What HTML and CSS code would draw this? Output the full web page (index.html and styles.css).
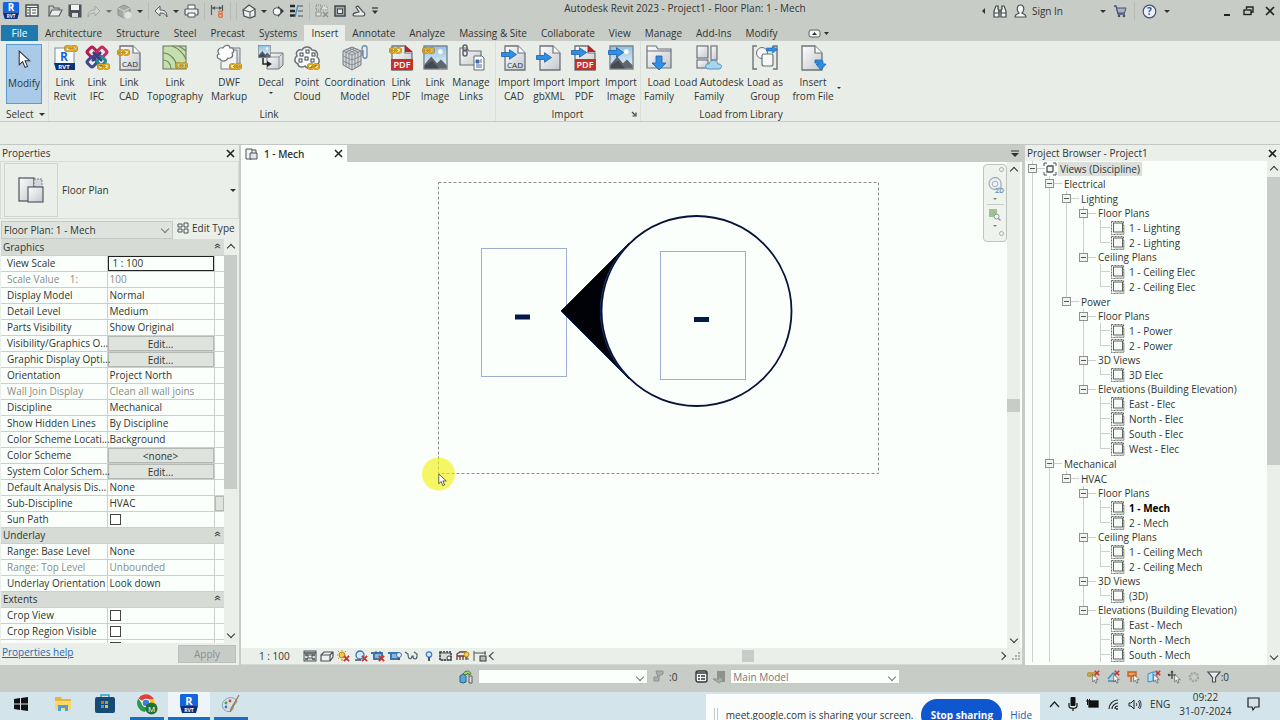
FILE: index.html
```html
<!DOCTYPE html>
<html lang="en">
<head>
    <meta charset="UTF-8">
    <meta name="viewport" content="width=device-width, initial-scale=1.0">
    <title>Autodesk Revit 2023 - Project1 - Floor Plan: 1 - Mech</title>
    <link rel="stylesheet" href="styles.css">
</head>
<body>
    <!-- shared icon shapes -->
    <svg class="defs" width="0" height="0" aria-hidden="true">
        <defs>
            <linearGradient id="metal" x1="0" y1="0" x2="1" y2="1">
                <stop offset="0" stop-color="#fdfdfd"/><stop offset="1" stop-color="#c3c7cc"/>
            </linearGradient>
            <linearGradient id="sky" x1="0" y1="0" x2="0" y2="1">
                <stop offset="0" stop-color="#8fc0e4"/><stop offset="1" stop-color="#eef6fa"/>
            </linearGradient>
        </defs>
        <symbol id="chain" viewBox="0 0 14 7">
            <rect x="1" y="1" width="6" height="5" rx="2.5" fill="none" stroke="#8c6a10" stroke-width="2"/>
            <rect x="7" y="1" width="6" height="5" rx="2.5" fill="none" stroke="#8c6a10" stroke-width="2"/>
            <rect x="1" y="1" width="6" height="5" rx="2.5" fill="none" stroke="#e6b42c" stroke-width="1.3"/>
            <rect x="7" y="1" width="6" height="5" rx="2.5" fill="none" stroke="#e6b42c" stroke-width="1.3"/>
            <path d="M4 3.5h6" stroke="#c89420" stroke-width="1.4"/>
        </symbol>
        <symbol id="arrow" viewBox="0 0 16 11">
            <path d="M.5 3.5h8V.7l7 4.8-7 4.8V7.5h-8z" fill="#2f8fe6" stroke="#1c5fa8" stroke-width=".8"/>
        </symbol>
        <symbol id="page" viewBox="0 0 22 26">
            <path d="M1 1h13l7 7v17H1z" fill="url(#metal)" stroke="#6d7378" stroke-width="1.3"/>
            <path d="M14 1v7h7" fill="#fff" stroke="#6d7378" stroke-width="1.2"/>
        </symbol>
        <symbol id="photo" viewBox="0 0 26 26">
            <rect x="1" y="1" width="24" height="24" fill="url(#sky)" stroke="#6d7378" stroke-width="1.2"/>
            <circle cx="18" cy="7" r="2.5" fill="#fffbe0"/>
            <path d="M1.600 20l7-8 6 7 4-4 6 6v3.400h-23z" fill="#5f666d"/>
            <path d="M1.600 24.400v-3l8-5 7 8z" fill="#434a52"/>
        </symbol>
        <symbol id="revit" viewBox="0 0 20 20" overflow="visible">
            <path d="M2 0h16l1 1v11H1V1z" fill="#1464e0"/><path d="M1 12h18l-2 7H3z" fill="#0b2f7c"/>
            <text x="10" y="10.500" text-anchor="middle" font-size="11" font-weight="700" fill="#fff">R</text>
            <text x="10" y="17.500" text-anchor="middle" font-size="5" font-weight="700" fill="#fff">RVT</text>
        </symbol>
        <symbol id="pointer" viewBox="0 0 12 18">
            <path d="M1 1v13l3.200-3 2.300 5.500 2.300-1-2.300-5.300H11z" fill="#fff" stroke="#333" stroke-width="1"/>
        </symbol>
        <symbol id="redx" viewBox="0 0 6 6"><path d="M.8.8l4.400 4.400M5.200.8L.8 5.200" stroke="#c9342c" stroke-width="1.600"/></symbol>
        <symbol id="sheet" viewBox="0 0 14 14">
            <rect x=".5" y=".5" width="12" height="13" fill="none" stroke="#666b68" stroke-dasharray="2 1"/>
            <rect x="2.500" y="2" width="9" height="9" fill="#f6f9f6" stroke="#5c625f"/>
            <path d="M4 13h9V4" fill="none" stroke="#a7ada9"/>
        </symbol>
    </svg>

    <div class="app">
        <header class="titlebar">
            <div class="qat">
                <button class="app-logo" title="Revit"><svg width="18" height="20"><use href="#revit"/></svg></button>
                <button title="Home"><svg width="14" height="14"><rect x="1" y="1" width="12" height="11" fill="#f5f7f5" stroke="#4a5055" stroke-width="1.500"/><path d="M1 3.500h12M5 4v8M7 6h4M7 9h4M2 6h2M2 9h2" stroke="#4a5055" stroke-width="1.200"/></svg></button>
                <button class="spaced" title="Open"><svg width="15" height="14"><path d="M1 12V2h4l1 2h5v2" fill="none" stroke="#5b6166" stroke-width="1.200"/><path d="M1 12l3-6h10l-3 6z" fill="#eceeec" stroke="#5b6166" stroke-width="1.200"/></svg></button>
                <button title="Save"><svg width="14" height="14"><path d="M.5.5h13v13h-11l-2-2z" fill="#4c5257"/><rect x="3" y="1" width="8" height="5" fill="#f3f5f3"/><rect x="4" y="9" width="6" height="4" fill="#d8dcd8"/></svg></button>
                <button class="dim" title="Redo"><svg width="14" height="13"><path d="M1 12c0-6 3-7 7-7V1l5 5-5 5V8C5 8 3 8 1 12z" fill="#d4d7d4" stroke="#8d928e"/></svg></button>
                <i class="caret dim"></i>
                <button title="Synchronize"><svg width="15" height="15"><path d="M7 1l6 3v7l-6 3-6-3V4z" fill="#a5aaa6" stroke="#8b908c"/><path d="M1 4l6 3 6-3M7 7v7" stroke="#d5d9d5" fill="none"/><circle cx="11" cy="11" r="3.500" fill="#dfe2df"/></svg></button>
                <i class="caret"></i>
                <b class="sep"></b>
                <button title="Undo"><svg width="14" height="13"><path d="M13 12c0-6-3-7-7-7V1L1 6l5 5V8c3 0 5 0 7 4z" fill="#e8ebe8" stroke="#555b60"/></svg></button>
                <i class="caret"></i>
                <button title="Print"><svg width="15" height="14"><path d="M4 5V1h7v4" fill="#fff" stroke="#4f555a"/><rect x="1" y="5" width="13" height="6" rx="1" fill="#eceeec" stroke="#4f555a" stroke-width="1.200"/><path d="M4 9h7v4H4z" fill="#fff" stroke="#4f555a"/></svg></button>
                <b class="sep"></b>
                <button title="Aligned dimension"><svg width="15" height="14"><path d="M1.500 1v10M12.500 1v6M2 4h10" stroke="#555b60" stroke-width="1.200"/><path d="M2 4l3-2v4zM12 4L9 2v4z" fill="#555b60"/><circle cx="10.500" cy="8.500" r="1.700" fill="none" stroke="#e2703a" stroke-width="1.300"/><circle cx="10.500" cy="11.500" r="1.900" fill="none" stroke="#e2703a" stroke-width="1.300"/></svg></button>
                <b class="sep"></b>
                <b class="sep"></b>
                <button title="Default 3D view"><svg width="14" height="14"><path d="M1 6l6-5 6 4v7l-5 2-6-2z" fill="#eceeec" stroke="#4b5156" stroke-width="1.300"/><path d="M1 6l7 2 5-3M8 8v5" stroke="#4b5156" fill="none"/></svg></button>
                <i class="caret"></i>
                <button title="Section"><svg width="12" height="13"><path d="M6 1l6 5-6 6z" fill="#33383c"/><circle cx="5" cy="6.500" r="3.800" fill="#f7f9f7" stroke="#4b5156"/></svg></button>
                <button title="Thin lines"><svg width="15" height="14"><path d="M1 2h5M1 7h5M1 11.500h5" stroke="#24292d" stroke-width="2.500"/><path d="M9 2h5M9 7h5M9 12h5" stroke="#4b5156"/><path d="M9 1L6 13" stroke="#3d8fd6" stroke-width="1.300"/></svg></button>
                <b class="sep"></b>
                <button title="Close inactive views"><svg width="14" height="14"><rect x="1" y="1" width="5" height="5" fill="#c3c7c3" stroke="#7c817e" stroke-dasharray="1 1"/><rect x="7" y="2" width="5" height="4" fill="#dde0dd" stroke="#8c918e" stroke-dasharray="1 1"/><rect x="1" y="8" width="5" height="4" fill="#dde0dd" stroke="#8c918e"/><path d="M8 8l5 5m0-5l-5 5" stroke="#8c918e" stroke-width="1.500"/></svg></button>
                <button title="Switch windows"><svg width="12" height="12"><rect x="1" y="1" width="10" height="10" fill="#a3a8ab" stroke="#42484d" stroke-width="1.500"/><rect x="3.500" y="4" width="5" height="4.500" fill="#e4e7e4" stroke="#42484d"/></svg></button>
                <button title="User interface"><svg width="15" height="13"><path d="M2 10c0-3 3-2 6-3L5 2l2-1 5 6c3 1 2 4 0 4H3z" fill="#eceeec" stroke="#4b5156" stroke-width="1.200"/></svg></button>
                <button title="Customize"><svg width="8" height="8"><path d="M1 1h6" stroke="#333" stroke-width="1.200"/><path d="M1 3.500h6L4 7z" fill="#333"/></svg></button>
            </div>
            <h1 class="title">Autodesk Revit 2023 - Project1 - Floor Plan: 1 - Mech</h1>
            <div class="account">
                <button title="Collapse"><svg width="5" height="8"><path d="M4 1v6L1 4z" fill="#333"/></svg></button>
                <button title="Search"><svg width="14" height="13"><path d="M3 1h2v3l1 1v7H1V6zM9 1h2l2 5v6H8V5l1-1zM5 6h4M1 8h5M8 8h5" fill="#f3f5f3" stroke="#3f454a" stroke-width="1.200"/></svg></button>
                <button class="signin"><svg width="13" height="14"><path d="M1 13c0-3 3-3 4-4-3-3-2-8 1.500-8S11 6 8 9c1 1 4 1 4 4z" fill="#f3f5f3" stroke="#4b5156" stroke-width="1.200"/></svg>Sign In</button>
                <i class="caret"></i>
                <button title="App store"><svg width="14" height="13"><path d="M1 1h2l2 8h7" fill="none" stroke="#4b5175" stroke-width="1.300"/><path d="M3.500 3h9.500l-1.500 5H5z" fill="#a9b1c6" stroke="#4b5175"/><circle cx="6" cy="11" r="1.300" fill="#4b5175"/><circle cx="11" cy="11" r="1.300" fill="#4b5175"/></svg></button>
                <b class="sep"></b>
                <button title="Help"><svg width="15" height="15"><circle cx="7.500" cy="7.500" r="6.300" fill="#eef2f8" stroke="#41506f" stroke-width="1.200"/><text x="7.500" y="11" text-anchor="middle" font-size="10" font-weight="700" fill="#2d55a5">?</text></svg></button>
                <i class="caret"></i>
            </div>
            <div class="window-buttons">
                <button title="Minimize"><svg width="10" height="10"><path d="M2 9h6" stroke="#222" stroke-width="2"/></svg></button>
                <button title="Restore"><svg width="11" height="10"><path d="M3.500 3V1h6.500v5H8" fill="none" stroke="#222" stroke-width="1.400"/><rect x="1" y="4" width="7" height="4.500" fill="none" stroke="#222" stroke-width="1.400"/></svg></button>
                <button title="Close"><svg width="10" height="10"><path d="M1 1l8 8m0-8L1 9" stroke="#222" stroke-width="1.600"/></svg></button>
            </div>
        </header>

        <nav class="tabs">
            <button class="file">File</button>
            <button>Architecture</button>
            <button>Structure</button>
            <button>Steel</button>
            <button>Precast</button>
            <button>Systems</button>
            <button class="active">Insert</button>
            <button>Annotate</button>
            <button>Analyze</button>
            <button>Massing &amp; Site</button>
            <button>Collaborate</button>
            <button>View</button>
            <button>Manage</button>
            <button>Add-Ins</button>
            <button>Modify</button>
            <button class="ribbon-toggle" title="Minimize ribbon"><svg width="22" height="9"><rect x="1" y="1" width="11" height="7" rx="2" fill="#f3f5f3" stroke="#5b6166"/><path d="M4 6h5L6.500 3zM16 3h5l-2.500 3z" fill="#333"/></svg></button>
        </nav>

        <div class="ribbon">
            <section class="panel select-panel">
                <div class="tools">
                    <button class="tool modify"><svg width="26" height="28"><use href="#pointer" x="7" y="5" width="13" height="19"/></svg>Modify</button>
                </div>
                <h2>Select <i class="caret"></i></h2>
            </section>
            <section class="panel link-panel">
                <div class="tools">
                    <button class="tool slim"><svg width="26" height="28"><rect x="3" y="4" width="19" height="16" fill="#fff" stroke="#7b8cab"/><path d="M2 19h21v7H4z" fill="#0f3476"/><text x="12" y="17" text-anchor="middle" font-size="12" font-weight="700" fill="#1464e0">R</text><text x="12" y="25" text-anchor="middle" font-size="6" font-weight="700" fill="#fff">RVT</text><use href="#chain" x="12" y="1" width="14" height="7"/></svg>Link<br>Revit</button>
                    <button class="tool slim"><svg width="26" height="28"><g fill="none" stroke-width="3"><rect x="4" y="4" width="8" height="8" rx="2" transform="rotate(45 8 8)" stroke="#b2204f"/><rect x="14" y="4" width="8" height="8" rx="2" transform="rotate(45 18 8)" stroke="#c42c60"/><rect x="4" y="14" width="8" height="8" rx="2" transform="rotate(45 8 18)" stroke="#3d4a8e"/><rect x="14" y="14" width="7" height="7" rx="2" transform="rotate(45 18 17)" stroke="#26889a"/></g><path d="M9 8l9 9M8 17l9-9" stroke="#3a3f83" stroke-width="2.500"/><use href="#chain" x="13" y="19" width="13" height="7"/></svg>Link<br>IFC</button>
                    <button class="tool slim"><svg width="26" height="28"><use href="#page" x="3" y="1" width="22" height="26"/><text x="14" y="23" text-anchor="middle" font-size="8" fill="#333">CAD</text><use href="#chain" x="1" y="5" width="13" height="7"/></svg>Link<br>CAD</button>
                    <button class="tool broad"><svg width="26" height="28"><rect x="1" y="2" width="23" height="23" fill="#c5dfae" stroke="#69705f"/><path d="M1 9c8 0 14 8 14 16M1 16c5 0 8 4 8 9M10 2c6 2 12 8 14 13M17 2l7 5" fill="none" stroke="#6b8a5b" stroke-width="1.200"/><use href="#chain" x="13" y="18" width="13" height="7"/></svg>Link<br>Topography</button>
                    <button class="tool wide"><svg width="26" height="28"><path d="M15 4h9v19H9v-5" fill="url(#metal)" stroke="#777c80"/><path d="M12 6h9v19H5v-7" fill="#f3f4f5" stroke="#777c80"/><path d="M4 15c-4-1-3-5-1-5-3-4 1-7 4-6 2-4 7-3 7 0 4-1 5 4 2 5 2 3-1 6-4 5-2 4-7 4-8 1z" fill="#fdfdfd" stroke="#6f7478" stroke-width="1.200"/><use href="#chain" x="13" y="19" width="13" height="7"/></svg>DWF<br>Markup</button>
                    <button class="tool mid"><svg width="26" height="28"><path d="M9 12l4-3h12v12l-4 4H9z" fill="url(#metal)" stroke="#70767b"/><path d="M21 25V13H10m11 0l4-4" fill="none" stroke="#8e9498"/><use href="#photo" x="0" y="1" width="13" height="13"/><path d="M5 14v6h5" fill="none" stroke="#222" stroke-width="1.500"/><path d="M9 17l5 3-5 3z" fill="#222"/></svg>Decal<i class="caret small"></i></button>
                    <button class="tool mid"><svg width="26" height="28"><path d="M4 20c-5-2-3-7-1-8-2-5 2-7 5-6 2-4 8-4 10 0 6 0 6 5 5 7 4 3 2 9-3 8-3 4-7 4-9 1-3 2-7 1-7-2z" fill="#fafbfb" stroke="#6d7378" stroke-width="1.500"/><g fill="#fff" stroke="#3f454a"><rect x="6" y="9" width="3" height="3"/><rect x="12" y="6" width="3" height="3"/><rect x="18" y="9" width="3" height="3"/><rect x="5" y="15" width="3" height="3"/><rect x="11" y="13" width="3" height="3"/><rect x="17" y="15" width="3" height="3"/></g><use href="#chain" x="13" y="19" width="13" height="7"/></svg>Point<br>Cloud</button>
                    <button class="tool broad"><svg width="28" height="28"><path d="M11 3l9 4v14l-9 5-9-5V7z" fill="#d3d6d8" stroke="#74797e"/><path d="M2 7l9 4 9-4M11 11v15M2 12l9 4 9-4M2 17l9 4 9-4M5 5l9 4v15M8 4l9 4v15M17 5L8 9v15M14 4L5 8v15" fill="none" stroke="#858b90"/><path d="M21 12V4c0-3 5-3 5 0v8c0 3-4 3-4 0V6" fill="none" stroke="#6a8ab0" stroke-width="1.300"/></svg>Coordination<br>Model</button>
                    <button class="tool slim"><svg width="26" height="28"><use href="#page" x="3" y="1" width="22" height="26"/><path d="M17 1l8 7h-8z" fill="#b3262b"/><rect x="3" y="15" width="22" height="11" fill="#c6302b"/><text x="14" y="24" text-anchor="middle" font-size="9" font-weight="600" fill="#fff">PDF</text><use href="#chain" x="1" y="3" width="13" height="7"/></svg>Link<br>PDF</button>
                    <button class="tool mid"><svg width="26" height="28"><use href="#photo" x="1" y="1" width="25" height="25"/><use href="#chain" x="0" y="3" width="13" height="7"/></svg>Link<br>Image</button>
                    <button class="tool mid"><svg width="26" height="28"><path d="M2 4h7l2 3h12v14H2z" fill="url(#metal)" stroke="#6d7378" stroke-width="1.200"/><path d="M16 12h8l2 2v12H16z" fill="#fff" stroke="#60676c"/><path d="M18 16h3v3h-3zM22 16h2M22 18h2M18 21h6M18 23h6" fill="#3c6ba8" stroke="#3c6ba8"/><g fill="none" stroke="#5d6368" stroke-width="1.500"><rect x="5" y="1" width="4" height="6" rx="2"/><rect x="5" y="6" width="4" height="6" rx="2"/></g></svg>Manage<br>Links</button>
                </div>
                <h2>Link</h2>
            </section>
            <section class="panel import-panel">
                <div class="tools">
                    <button class="tool mid"><svg width="26" height="28"><use href="#page" x="3" y="1" width="22" height="26"/><text x="14" y="24" text-anchor="middle" font-size="8" fill="#333">CAD</text><use href="#arrow" x="0" y="5" width="16" height="11"/></svg>Import<br>CAD</button>
                    <button class="tool slim"><svg width="26" height="28"><use href="#page" x="3" y="1" width="22" height="26"/><use href="#arrow" x="0" y="8" width="16" height="11"/></svg>Import<br>gbXML</button>
                    <button class="tool mid"><svg width="26" height="28"><use href="#page" x="3" y="1" width="22" height="26"/><path d="M17 1l8 7h-8z" fill="#b3262b"/><rect x="4" y="15" width="21" height="11" fill="#c6302b"/><text x="14" y="24" text-anchor="middle" font-size="9" font-weight="600" fill="#fff">PDF</text><use href="#arrow" x="0" y="3" width="16" height="11"/></svg>Import<br>PDF</button>
                    <button class="tool mid"><svg width="26" height="28"><use href="#photo" x="1" y="1" width="25" height="25"/><use href="#arrow" x="0" y="3" width="16" height="11"/></svg>Import<br>Image</button>
                </div>
                <h2>Import</h2>
                <button class="launcher" title="Import options"><svg width="6" height="6"><path d="M1 1l3 3M5 1.500V5H1.500" fill="none" stroke="#444" stroke-width="1.200"/></svg></button>
            </section>
            <section class="panel library-panel">
                <div class="tools">
                    <button class="tool mid"><svg width="26" height="28"><path d="M1 24V2h9l2 3h13v19z" fill="url(#metal)" stroke="#6d7378" stroke-width="1.200"/><path d="M1 7h24" stroke="#6d7378"/><path d="M10 12h6v7h4l-7 7-7-7h4z" fill="#2f8fe6" stroke="#1c5fa8" stroke-width=".8"/></svg>Load<br>Family</button>
                    <button class="tool huge"><svg width="26" height="28"><g fill="url(#metal)" stroke="#6d7378" stroke-width="1.200"><rect x="1" y="2" width="11" height="12"/><rect x="15" y="2" width="6" height="14"/><rect x="1" y="16" width="11" height="8"/></g><path d="M13 25c-5 0-4-6 0-5 1-5 8-5 9 0 5 0 4 5 1 5z" fill="#a9d4ee" stroke="#5493bd"/></svg>Load Autodesk<br>Family</button>
                    <button class="tool wide"><svg width="26" height="28"><path d="M5 2H1v23h4M21 2h4v23h-4" fill="none" stroke="#6d7378" stroke-width="1.400"/><circle cx="10" cy="9" r="5.500" fill="#f6f7f7" stroke="#6d7378"/><rect x="10" y="10" width="11" height="12" rx="2" fill="#f6f7f7" stroke="#6d7378" stroke-width="1.200"/><use href="#arrow" x="14" y="1" width="12" height="9"/></svg>Load as<br>Group</button>
                    <button class="tool wide"><svg width="28" height="28"><use href="#page" x="2" y="1" width="22" height="26"/><path d="M16 16h5c3 0 3 1 3 4h3l-5 6-5-6h3v-1h-4z" fill="#2f8fe6" stroke="#1c5fa8" stroke-width=".8"/></svg>Insert<br>from File</button>
                    <i class="caret small"></i>
                </div>
                <h2>Load from Library</h2>
            </section>
        </div>
        <div class="options-bar"></div>

        <main class="workspace">
            <aside class="properties">
                <div class="panel-title">Properties <button title="Close"><svg width="9" height="9"><path d="M1 1l7 7m0-7L1 8" stroke="#222" stroke-width="1.600"/></svg></button></div>
                <div class="family">
                    <span class="thumb"><svg width="28" height="28"><rect x="2" y="2" width="15" height="23" fill="url(#metal)" stroke="#4b5156" stroke-width="1.200"/><rect x="17" y="3" width="8" height="8" fill="#d3d7db" stroke="#777c80" stroke-dasharray="2 1"/><rect x="11" y="11" width="15" height="15" fill="url(#metal)" stroke="#555b60" stroke-width="1.200"/></svg></span>
                    <span>Floor Plan</span>
                    <i class="caret"></i>
                </div>
                <div class="type-row">
                    <span class="select"><select aria-label="Type"><option>Floor Plan: 1 - Mech</option></select></span>
                    <button><svg width="12" height="12"><path d="M1 2h4v3H1zM1 7h4v3H1zM7 1h4v4H7zM7 7h4v4H7z" fill="#f3f5f3" stroke="#4b5156"/></svg>Edit Type</button>
                </div>
                <div class="prop-body">
                    <div class="prop-scroll">
                        <table>
                            <colgroup><col class="col-name"><col><col class="col-more"></colgroup>
                            <tr class="group"><th colspan="3"><span>Graphics</span></th></tr>
                            <tr><td><label for="scale">View Scale</label></td><td class="field"><input type="text" id="scale" value="1 : 100"></td><td></td></tr>
                            <tr class="off"><td>Scale Value &nbsp;&nbsp; 1:</td><td>100</td><td></td></tr>
                            <tr><td>Display Model</td><td>Normal</td><td></td></tr>
                            <tr><td>Detail Level</td><td>Medium</td><td></td></tr>
                            <tr><td>Parts Visibility</td><td>Show Original</td><td></td></tr>
                            <tr><td>Visibility/Graphics O...</td><td class="field"><button>Edit...</button></td><td></td></tr>
                            <tr><td>Graphic Display Opti...</td><td class="field"><button>Edit...</button></td><td></td></tr>
                            <tr><td>Orientation</td><td>Project North</td><td></td></tr>
                            <tr class="off"><td>Wall Join Display</td><td>Clean all wall joins</td><td></td></tr>
                            <tr><td>Discipline</td><td>Mechanical</td><td></td></tr>
                            <tr><td>Show Hidden Lines</td><td>By Discipline</td><td></td></tr>
                            <tr><td>Color Scheme Locati...</td><td>Background</td><td></td></tr>
                            <tr><td>Color Scheme</td><td class="field"><button>&lt;none&gt;</button></td><td></td></tr>
                            <tr><td>System Color Schem...</td><td class="field"><button>Edit...</button></td><td></td></tr>
                            <tr><td>Default Analysis Dis...</td><td>None</td><td></td></tr>
                            <tr><td>Sub-Discipline</td><td>HVAC</td><td class="field"><button title="Browse"></button></td></tr>
                            <tr><td><label for="sun">Sun Path</label></td><td><input type="checkbox" id="sun"></td><td></td></tr>
                            <tr class="group"><th colspan="3"><span>Underlay</span></th></tr>
                            <tr><td>Range: Base Level</td><td>None</td><td></td></tr>
                            <tr class="off"><td>Range: Top Level</td><td>Unbounded</td><td></td></tr>
                            <tr><td>Underlay Orientation</td><td>Look down</td><td></td></tr>
                            <tr class="group"><th colspan="3"><span>Extents</span></th></tr>
                            <tr><td><label for="crop">Crop View</label></td><td><input type="checkbox" id="crop"></td><td></td></tr>
                            <tr><td><label for="region">Crop Region Visible</label></td><td><input type="checkbox" id="region"></td><td></td></tr>
                            <tr><td></td><td><input type="checkbox" aria-label="Annotation crop"></td><td></td></tr>
                        </table>
                    </div>
                    <div class="scrollbar"><i class="chev up"></i><b class="knob tall"></b><i class="chev down"></i></div>
                </div>
                <div class="prop-footer"><a href="#">Properties help</a><button disabled>Apply</button></div>
            </aside>

            <section class="view">
                <div class="view-tabs">
                    <div class="view-tab"><svg width="13" height="12"><path d="M1 1h6v10H1z" fill="#f3f5f3" stroke="#4b5156"/><path d="M5 5h7v6H5zM7 2h4v3" fill="#e3e6e9" stroke="#4b5156"/></svg><span>1 - Mech</span><button title="Close view"><svg width="9" height="9"><path d="M1 1l7 7m0-7L1 8" stroke="#222" stroke-width="1.500"/></svg></button></div>
                    <button title="View list"><svg width="8" height="7"><path d="M0 1h8" stroke="#333"/><path d="M0 3h8L4 7z" fill="#333"/></svg></button>
                </div>
                <div class="view-body">
                    <svg class="drawing" role="img" aria-label="Elevation mark">
                        <g transform="translate(-241 -162)">
                            <rect x="438.500" y="182.500" width="440" height="291" fill="none" stroke="#8b908d" stroke-dasharray="3 2"/>
                            <rect x="481.500" y="248.500" width="85" height="128" fill="none" stroke="#9fadd0"/>
                            <rect x="660.500" y="251.500" width="85" height="128" fill="none" stroke="#9fadd0"/>
                            <path d="M561 311L629 243A95 95 0 0 0 629 379Z" fill="#000208" stroke="#0c2459"/>
                            <circle cx="696.500" cy="311" r="95" fill="none" stroke="#07123a" stroke-width="1.800"/>
                            <path d="M515 314.500h15v5h-15zM694 317h15v5h-15z" fill="#04184a"/>
                            <circle cx="438.500" cy="474" r="16.500" fill="#f2f000" fill-opacity=".6"/>
                            <use href="#pointer" x="438" y="473" width="9" height="14"/>
                        </g>
                    </svg>
                    <div class="navbar">
                        <i class="dot"></i>
                        <button title="Steering wheel"><svg width="17" height="18"><path d="M14 13V7a6 6 0 1 0-2 5l3 1" fill="#eef2f4" stroke="#a3b0bd" stroke-width="1.300"/><circle cx="8" cy="8" r="2.800" fill="none" stroke="#a3b0bd"/><text x="8" y="17" font-size="7" font-weight="700" fill="#7d9cc4">2D</text></svg></button>
                        <i class="caret small dim"></i>
                        <hr>
                        <button title="Zoom region"><svg width="12" height="12"><rect x="0" y="0" width="8" height="8" fill="#9cc391"/><circle cx="7.500" cy="7.500" r="2.500" fill="#f3f5f3" stroke="#8a938d"/><path d="M9.500 9.500l2 2" stroke="#8a938d" stroke-width="1.300"/></svg></button>
                        <i class="caret small dim"></i>
                        <i class="dot"></i>
                    </div>
                    <div class="scrollbar"><i class="chev up"></i><b class="knob middle"></b><i class="chev down"></i></div>
                </div>
                <div class="view-controls">
                    <span class="scale">1 : 100</span>
                    <button title="Detail level"><svg width="14" height="12"><rect x="1" y="1" width="12" height="10" fill="#d6dad7" stroke="#4b5156"/><path d="M1 3h12M2 5h3M9 5h3M2 9h3M9 9h3" stroke="#4b5156" stroke-width="1.500"/><rect x="5" y="5" width="4" height="3" fill="#fff" stroke="#4b5156"/></svg></button>
                    <button title="Visual style"><svg width="14" height="12"><path d="M1 5l3-3h9v5l-3 4H1zM1 5h9v6M10 5l3-3" fill="#eef0ee" stroke="#4b5156" stroke-width="1.200"/></svg></button>
                    <button title="Sun path"><svg width="14" height="12"><circle cx="5" cy="5" r="3" fill="#f5c63c" stroke="#b88416"/><path d="M5 0v1M5 9v2M0 5h1M1 1l1 1M9 1L8 2M1 9l1-1" stroke="#b88416"/><use href="#redx" x="6" y="5" width="7" height="7"/></svg></button>
                    <button title="Shadows"><svg width="14" height="12"><circle cx="6" cy="5" r="4" fill="#d5e8f6" stroke="#3b76b4" stroke-width="1.300"/><path d="M1 10h6" stroke="#4b5156" stroke-width="1.500"/><use href="#redx" x="7" y="5" width="7" height="7"/></svg></button>
                    <button title="Crop view"><svg width="14" height="12"><rect x="4" y="3" width="6" height="6" fill="#8fb6dc"/><path d="M3 3h8v6M0 3h3v6h9" fill="none" stroke="#3b76b4" stroke-width="2"/><path d="M5 1v3M9 1v3" stroke="#4b5156"/><use href="#redx" x="7" y="5" width="7" height="7"/></svg></button>
                    <button title="Show crop region"><svg width="14" height="12"><rect x="4" y="3" width="6" height="6" fill="#8fb6dc"/><path d="M3 3h7v6M0 3h3v6h7" fill="none" stroke="#3b76b4" stroke-width="2"/><circle cx="11" cy="5" r="2.500" fill="#e3eefa" stroke="#3b76b4"/><path d="M10 9h2" stroke="#4b5156" stroke-width="2"/></svg></button>
                    <button title="Temporary hide/isolate"><svg width="14" height="12"><path d="M0 2l3 2c0 6 4 6 4 2h1c0 4 4 4 4 0V4l-3-2" fill="none" stroke="#4e5c68" stroke-width="1.200"/></svg></button>
                    <button title="Reveal hidden elements"><svg width="14" height="12"><circle cx="7" cy="4.500" r="2.700" fill="#d9e9fb" stroke="#3b7fd0" stroke-width="1.300"/><path d="M7 7v4" stroke="#4b5156" stroke-width="2"/></svg></button>
                    <button title="Temporary view properties"><svg width="14" height="12"><rect x="1" y="2" width="11" height="8" fill="#d6dad7" stroke="#33383c" stroke-width="1.500" stroke-dasharray="2 1"/><path d="M1 3h11v7H1z" fill="none" stroke="#555b60"/><circle cx="10" cy="8" r="2" fill="#fff" stroke="#33383c"/></svg></button>
                    <button title="Analytical model"><svg width="14" height="12"><path d="M1 10V4l3-2h6v8M4 10V6h3v4M1 6h9" fill="none" stroke="#6a3b3b" stroke-width="1.300"/><circle cx="10.500" cy="4.500" r="2.500" fill="#f6d04d" stroke="#b88416"/><path d="M10 8h2v2" stroke="#4b5156" fill="none"/></svg></button>
                    <button title="Constraints"><svg width="14" height="12"><path d="M1 1v10M1 3h12M12 1v4" stroke="#4b5156" fill="none"/><rect x="7" y="6" width="6" height="5" fill="#b9bebb" stroke="#33383c"/></svg></button>
                    <i class="chev left"></i>
                    <div class="hscroll"><b class="knob"></b></div>
                    <i class="chev right"></i>
                    <svg class="grip" width="9" height="9"><path d="M7 0h2v2H7zM4 3h2v2H4zM7 3h2v2H7zM1 6h2v2H1zM4 6h2v2H4zM7 6h2v2H7z" fill="#aeb3af"/></svg>
                </div>
            </section>

            <aside class="browser">
                <div class="panel-title">Project Browser - Project1 <button title="Close"><svg width="9" height="9"><path d="M1 1l7 7m0-7L1 8" stroke="#222" stroke-width="1.600"/></svg></button></div>
                <div class="browser-body">
                    <ul class="tree">
                        <li class="more"><div class="row"><button class="toggle"></button><svg width="14" height="14"><path d="M1 4V1h3M10 1h3v3M13 10v3h-3M4 13H1v-3" fill="none" stroke="#4b5156"/><path d="M4 5l1-1h5v5l-1 1H4z" fill="#f3f5f3" stroke="#4b5156" stroke-width="1.300"/></svg><span class="current">Views (Discipline)</span></div>
                            <ul>
                                <li><div class="row"><button class="toggle"></button>Electrical</div>
                                    <ul>
                                        <li><div class="row"><button class="toggle"></button>Lighting</div>
                                            <ul>
                                                <li><div class="row kind"><button class="toggle"></button>Floor Plans</div>
                                                    <ul>
                                                        <li class="leaf"><svg width="14" height="14"><use href="#sheet"/></svg>1 - Lighting</li>
                                                        <li class="leaf"><svg width="14" height="14"><use href="#sheet"/></svg>2 - Lighting</li>
                                                    </ul>
                                                </li>
                                                <li><div class="row kind"><button class="toggle"></button>Ceiling Plans</div>
                                                    <ul>
                                                        <li class="leaf"><svg width="14" height="14"><use href="#sheet"/></svg>1 - Ceiling Elec</li>
                                                        <li class="leaf"><svg width="14" height="14"><use href="#sheet"/></svg>2 - Ceiling Elec</li>
                                                    </ul>
                                                </li>
                                            </ul>
                                        </li>
                                        <li><div class="row"><button class="toggle"></button>Power</div>
                                            <ul>
                                                <li><div class="row kind"><button class="toggle"></button>Floor Plans</div>
                                                    <ul>
                                                        <li class="leaf"><svg width="14" height="14"><use href="#sheet"/></svg>1 - Power</li>
                                                        <li class="leaf"><svg width="14" height="14"><use href="#sheet"/></svg>2 - Power</li>
                                                    </ul>
                                                </li>
                                                <li><div class="row kind"><button class="toggle"></button>3D Views</div>
                                                    <ul>
                                                        <li class="leaf"><svg width="14" height="14"><use href="#sheet"/></svg>3D Elec</li>
                                                    </ul>
                                                </li>
                                                <li><div class="row kind"><button class="toggle"></button>Elevations (Building Elevation)</div>
                                                    <ul>
                                                        <li class="leaf"><svg width="14" height="14"><use href="#sheet"/></svg>East - Elec</li>
                                                        <li class="leaf"><svg width="14" height="14"><use href="#sheet"/></svg>North - Elec</li>
                                                        <li class="leaf"><svg width="14" height="14"><use href="#sheet"/></svg>South - Elec</li>
                                                        <li class="leaf"><svg width="14" height="14"><use href="#sheet"/></svg>West - Elec</li>
                                                    </ul>
                                                </li>
                                            </ul>
                                        </li>
                                    </ul>
                                </li>
                                <li class="more"><div class="row"><button class="toggle"></button>Mechanical</div>
                                    <ul>
                                        <li><div class="row"><button class="toggle"></button>HVAC</div>
                                            <ul>
                                                <li><div class="row kind"><button class="toggle"></button>Floor Plans</div>
                                                    <ul>
                                                        <li class="leaf open"><svg width="14" height="14"><use href="#sheet"/></svg>1 - Mech</li>
                                                        <li class="leaf"><svg width="14" height="14"><use href="#sheet"/></svg>2 - Mech</li>
                                                    </ul>
                                                </li>
                                                <li><div class="row kind"><button class="toggle"></button>Ceiling Plans</div>
                                                    <ul>
                                                        <li class="leaf"><svg width="14" height="14"><use href="#sheet"/></svg>1 - Ceiling Mech</li>
                                                        <li class="leaf"><svg width="14" height="14"><use href="#sheet"/></svg>2 - Ceiling Mech</li>
                                                    </ul>
                                                </li>
                                                <li><div class="row kind"><button class="toggle"></button>3D Views</div>
                                                    <ul>
                                                        <li class="leaf"><svg width="14" height="14"><use href="#sheet"/></svg>(3D)</li>
                                                    </ul>
                                                </li>
                                                <li><div class="row kind"><button class="toggle"></button>Elevations (Building Elevation)</div>
                                                    <ul>
                                                        <li class="leaf"><svg width="14" height="14"><use href="#sheet"/></svg>East - Mech</li>
                                                        <li class="leaf"><svg width="14" height="14"><use href="#sheet"/></svg>North - Mech</li>
                                                        <li class="leaf more"><svg width="14" height="14"><use href="#sheet"/></svg>South - Mech</li>
                                                    </ul>
                                                </li>
                                            </ul>
                                        </li>
                                    </ul>
                                </li>
                            </ul>
                        </li>
                    </ul>
                    <div class="scrollbar"><i class="chev up"></i><b class="knob long"></b><i class="chev down"></i></div>
                </div>
            </aside>
        </main>

        <div class="statusbar">
            <svg width="14" height="14"><path d="M1 6l3-2 3 2v6l-3 1-3-1z" fill="#58a7dd" stroke="#2c5f86"/><path d="M4 4c2-4 7-4 8 0l-3 1V3L7 5z" fill="#a8cf7a" stroke="#4d7a3a"/><path d="M10 6h3v7h-3z" fill="#dfe3e0" stroke="#555b60"/></svg>
            <span class="select workset"><select aria-label="Workset"><option></option></select></span>
            <svg width="11" height="13"><path d="M3 1h7v3L6 6v5H1V7h4z" fill="#a9aeab" stroke="#8c918e"/></svg><span class="count">:0</span>
            <svg class="options-icon" width="13" height="13"><rect x="1" y="1" width="11" height="11" rx="2" fill="#f3f5f3" stroke="#33383c" stroke-width="1.400"/><path d="M1 3h11M3 6h2M3 9h2M6 6h4M6 9h4" stroke="#33383c" stroke-width="1.300"/></svg>
            <svg width="12" height="13"><rect x="4" y="1" width="8" height="11" fill="#8e9390"/><path d="M0 9h6V6l4 4-4 3z" fill="#a9aeab" stroke="#8e9390"/></svg>
            <span class="select model"><select aria-label="Design option"><option>Main Model</option></select></span>
            <div class="picks">
                <button title="Select links"><svg width="14" height="14"><use href="#chain" x="0" y="2" width="9" height="5"/><use href="#redx" x="7" y="0" width="6" height="6"/><use href="#pointer" x="5" y="4" width="7" height="10"/></svg></button>
                <button title="Select underlay"><svg width="14" height="14"><path d="M1 11h8M1 9l5-6 3 1" fill="none" stroke="#3b8fc8" stroke-width="1.500"/><use href="#redx" x="7" y="0" width="6" height="6"/><use href="#pointer" x="6" y="4" width="7" height="10"/></svg></button>
                <button title="Select pinned"><svg width="14" height="14"><path d="M1 2h8v4H1zM4 6v6" fill="#f1a35e" stroke="#c95d1f" stroke-width="1.400"/><use href="#pointer" x="6" y="4" width="7" height="10"/></svg></button>
                <button title="Select by face"><svg width="14" height="14"><path d="M1 4l5-2v9l-5 1zM6 2h4v8H6" fill="#b8dcf2" stroke="#3b8fc8"/><use href="#redx" x="8" y="0" width="6" height="6"/><use href="#pointer" x="6" y="4" width="7" height="10"/></svg></button>
                <button title="Drag on selection"><svg width="14" height="14"><path d="M5 1v8M1 5h8M5 1L4 2.500M5 1l1 1.500M1 5l1.500-1M1 5l1.500 1" stroke="#33383c" stroke-width="1.200"/><use href="#pointer" x="7" y="4" width="7" height="10"/></svg></button>
                <button title="Background processes"><svg width="14" height="14"><circle cx="7" cy="7" r="4" fill="none" stroke="#a2a7a3" stroke-width="2.500" stroke-dasharray="2 1"/></svg></button>
                <button title="Filter"><svg width="14" height="14"><path d="M1 2h12L8.500 7.500V12h-3V7.500z" fill="#e9ecea" stroke="#4b5156" stroke-width="1.200"/></svg></button>
                <span>:0</span>
            </div>
        </div>

        <footer class="taskbar">
            <div class="apps">
                <button title="Start"><svg width="14" height="14"><path d="M0 2l6-1v5.500H0zM7 1l7-1v6.500H7zM0 7.500h6V13l-6-1zM7 7.500h7V14l-7-1z" fill="#111"/></svg></button>
                <button title="File Explorer"><svg width="18" height="16"><path d="M1 1h6l1 2h9v11H1z" fill="#e8b637"/><path d="M1 5h16v9H1z" fill="#fbd766"/><path d="M4 15V9h10v6h-3v-3H7v3z" fill="#4b9fdc"/></svg></button>
                <button title="Store"><svg width="20" height="19"><path d="M6 4V1h8v3" fill="none" stroke="#2e9fc8" stroke-width="1.500"/><rect x="0" y="3" width="20" height="16" rx="2" fill="#174a74"/><path d="M6 7h3v3H6z" fill="#f05a33"/><path d="M10 7h3v3h-3z" fill="#80bb2d"/><path d="M6 11h3v3H6z" fill="#28a5e6"/><path d="M10 11h3v3h-3z" fill="#fbbc22"/></svg></button>
                <button class="running" title="Chrome"><svg width="22" height="22"><circle cx="10" cy="10" r="9" fill="#fff"/><path d="M10 10L2.500 5.500A9 9 0 0 1 18 6h-8z" fill="#dc4336"/><path d="M2.300 5.500A9 9 0 0 0 9 19l4-7H7z" fill="#279a50"/><path d="M18 6a9 9 0 0 1-8.500 13L13 12l-1-6z" fill="#f8c832"/><circle cx="10" cy="10" r="4.300" fill="#fff"/><circle cx="10" cy="10" r="3.300" fill="#3f7de0"/><circle cx="15.500" cy="15.500" r="6" fill="#24702e"/><text x="15.500" y="19" text-anchor="middle" font-size="8" fill="#fff">M</text></svg></button>
                <button class="running focus" title="Revit"><svg width="20" height="20"><use href="#revit"/></svg></button>
                <button class="running" title="Paint"><svg width="20" height="19"><path d="M2 14C-1 8 6 2 12 4c4 1 5 5 2 6-2 1-1 3-2 5-2 4-8 3-10-1z" fill="#d5e2ea" stroke="#8ba2b0"/><circle cx="5" cy="9" r="1.400" fill="#4b9f44"/><circle cx="9" cy="7" r="1.400" fill="#d04a3c"/><circle cx="5" cy="13" r="1.400" fill="#3b74c9"/><path d="M18 1l-7 14-2 3 1-4z" fill="#c98d4c" stroke="#8a5a26" stroke-width=".6"/></svg></button>
            </div>
            <div class="sharing">
                <i class="bars"></i><span>meet.google.com is sharing your screen.</span>
                <button>Stop sharing</button>
                <a href="#">Hide</a>
            </div>
            <div class="tray">
                <svg width="11" height="8"><path d="M1 7l4.500-5L10 7" fill="none" stroke="#222" stroke-width="1.200"/></svg>
                <svg width="8" height="14"><rect x="1.500" y="0" width="5" height="9" rx="1" fill="#111"/><path d="M0 6v3c0 3 8 3 8 0V6M4 11v3" fill="none" stroke="#111" stroke-width="1.200"/></svg>
                <svg width="13" height="10"><rect x="3" y="2" width="9" height="6" fill="#111" stroke="#111" stroke-width="1.300"/><path d="M0 2h5M1.500 0v6M3.500 0v4" stroke="#111"/></svg>
                <svg width="11" height="11"><path d="M1 10C1 5 5 1 10 1M4 10c0-3 3-6 6-6M7 10c0-2 1-3 3-3" fill="none" stroke="#222" stroke-width="1.200"/><circle cx="9" cy="10" r="1" fill="#222"/></svg>
                <svg width="13" height="11"><path d="M1 4h2l3-3v9L3 7H1zM8 4c1 1 1 2 0 3M10 2c2 2 2 5 0 7M11.500 1c2 3 2 6 0 9" fill="none" stroke="#222"/></svg>
                <span>ENG</span>
                <span class="clock">09:22<br>31-07-2024</span>
                <svg class="notices" width="13" height="14"><path d="M1 1h11v9H8l-2 3-1-3H1z" fill="none" stroke="#222" stroke-width="1.200"/></svg>
            </div>
        </footer>
    </div>
</body>
</html>
```
FILE: styles.css
```css
* {
    box-sizing: border-box;
}
body {
    margin: 0;
    background-color: #c8ccc7;
    color: #303532;
    font-family: 'Open Sans', 'Noto Sans', sans-serif;
    font-size: 10px;
    line-height: 14px;
}
button, input, select {
    font: inherit;
    color: inherit;
    margin: 0;
    padding: 0;
    border: none;
    border-radius: 0;
    background: none;
}
button {
    cursor: pointer;
}
svg {
    display: block;
    flex: none;
    overflow: visible;
}
ul {
    list-style: none;
    margin: 0;
    padding: 0;
}
.defs {
    position: absolute;
}
.app {
    display: flex;
    flex-direction: column;
    height: 100vh;
    overflow: hidden;
}

/* small shared marks */
.caret {
    flex: none;
    border: 3px solid transparent;
    border-top-color: #333;
    border-bottom: none;
    width: 0;
    height: 0;
}
.caret.small {
    border-width: 2px 2px 0;
}
.dim {
    opacity: 0.6;
}
.sep {
    width: 1px;
    height: 18px;
    background-color: #b7bbb6;
}
.chev {
    width: 6px;
    height: 6px;
    border: solid #333;
    border-width: 1px 1px 0 0;
    transform: rotate(-45deg);
}
.chev.down {
    transform: rotate(135deg);
}
.chev.left {
    transform: rotate(-135deg);
}
.chev.right {
    transform: rotate(45deg);
}
.knob {
    display: block;
    background-color: #c8ccc8;
}
.scrollbar {
    display: flex;
    flex-direction: column;
    justify-content: space-between;
    align-items: center;
    width: 13px;
    padding: 6px 0;
    background-color: #ebefea;
}
.scrollbar .knob {
    width: 100%;
}
.knob.tall {
    flex: 1;
    margin: 4px 0 142px;
}
.knob.long {
    flex: 1;
    margin: 4px 0 188px;
}
.knob.middle {
    height: 13px;
}

/* title bar */
.titlebar {
    display: flex;
    height: 25px;
    flex: none;
}
.titlebar button {
    display: flex;
    align-items: center;
}
.qat {
    display: flex;
    align-items: center;
    gap: 5px;
    padding-left: 2px;
    height: 22px;
}
.qat .spaced {
    margin-left: 4px;
}
.title {
    flex: 1;
    margin: 1px 0 0;
    padding-left: 10px;
    font-size: 10px;
    font-weight: 400;
    text-align: center;
}
.account {
    display: flex;
    align-items: center;
    gap: 7px;
    height: 22px;
}
.account .signin {
    gap: 5px;
    margin-right: 30px;
}
.window-buttons {
    display: flex;
    align-items: center;
    gap: 11px;
    height: 22px;
    padding: 0 5px 0 52px;
}

/* tabs */
.tabs {
    display: flex;
    flex: none;
    height: 16px;
    padding-left: 1px;
}
.tabs button {
    padding: 0 7px;
}
.tabs .file {
    width: 37px;
    background-color: #1f78ae;
    color: #fff;
}
.tabs .active {
    background-color: #eaeee9;
}
.tabs .ribbon-toggle {
    margin-left: 16px;
}

/* ribbon */
.ribbon {
    display: flex;
    flex: none;
    height: 81px;
    border-bottom: 1px solid #c9cdc9;
    background-color: #e9ede8;
}
.panel {
    position: relative;
    display: flex;
    flex-direction: column;
    justify-content: space-between;
    padding: 3px 0 0;
    border-right: 1px solid #dadeda;
}
.panel h2 {
    display: flex;
    align-items: center;
    justify-content: center;
    gap: 5px;
    margin: 0;
    font-size: 10px;
    font-weight: 400;
}
.select-panel {
    width: 49px;
    padding-left: 6px;
}
.select-panel h2 {
    justify-content: flex-start;
}
.link-panel {
    padding-right: 6px;
}
.import-panel {
    padding-right: 1px;
}
.library-panel {
    border-right: none;
}
.tools {
    display: flex;
    align-items: flex-start;
}
.import-panel .tools {
    gap: 1px;
}
.tool {
    display: flex;
    flex-direction: column;
    align-items: center;
    height: 60px;
    text-align: center;
    white-space: nowrap;
}
.tool svg {
    margin-bottom: 3px;
}
.modify {
    width: 36px;
    border: 1px solid #5b9bd0;
    background-color: #a9cbe9;
}
.slim {
    width: 32px;
}
.mid {
    width: 36px;
}
.wide {
    width: 48px;
}
.broad {
    width: 60px;
}
.huge {
    width: 64px;
}
.tool .caret {
    margin-top: 3px;
}
.tools > .caret {
    margin-top: 43px;
}
.launcher {
    position: absolute;
    right: 3px;
    bottom: 4px;
}
.options-bar {
    flex: none;
    height: 23px;
    border-bottom: 1px solid #c3c7c3;
    background-color: #e9ede8;
}

/* workspace */
.workspace {
    display: flex;
    flex: 1;
    min-height: 0;
    gap: 2px;
}
.panel-title {
    display: flex;
    flex: none;
    justify-content: space-between;
    align-items: center;
    height: 16px;
    padding: 0 4px 0 2px;
    background-color: #ebefea;
}
.properties {
    display: flex;
    flex-direction: column;
    width: 239px;
    background-color: #ebefea;
}
.family {
    display: flex;
    align-items: center;
    gap: 4px;
    height: 58px;
    padding: 0 2px 0 3px;
    border: 1px solid #d8dcd8;
}
.family .thumb {
    display: grid;
    place-items: center;
    width: 54px;
    height: 54px;
    border: 1px solid #d0d4d0;
}
.family .caret {
    margin-left: auto;
}
.type-row {
    display: flex;
    gap: 4px;
    height: 20px;
    padding: 2px 0 0 1px;
}
.type-row button {
    display: flex;
    align-items: center;
    gap: 3px;
    height: 14px;
}
.select {
    position: relative;
    display: flex;
    width: 172px;
    background-color: #dfe3de;
    border: 1px solid #c5c9c5;
}
.select select {
    width: 100%;
    padding-left: 2px;
    appearance: none;
}
.select::after {
    content: '';
    position: absolute;
    right: 4px;
    top: 4px;
    width: 5px;
    height: 5px;
    border: solid #777;
    border-width: 0 1px 1px 0;
    transform: rotate(45deg);
}
.prop-body {
    display: flex;
    flex: 1;
    min-height: 0;
    padding-left: 1px;
}
.prop-scroll {
    flex: 1;
    overflow: hidden;
}
.prop-body .scrollbar {
    margin-right: 2px;
}
.properties table {
    width: 100%;
    border-collapse: collapse;
    table-layout: fixed;
    background-color: #fbfffb;
}
.col-name {
    width: 106px;
}
.col-more {
    width: 10px;
}
.properties th, .properties td {
    height: 16px;
    padding: 0;
    line-height: 14px;
    text-align: left;
    font-weight: 400;
    white-space: nowrap;
    border-bottom: 1px solid #ccd0cc;
}
.properties td {
    padding-left: 2px;
    border-right: 1px solid #ccd0cc;
}
.properties td:first-child {
    padding-left: 6px;
}
.properties td:last-child {
    padding: 0;
    border-right: none;
}
.properties .group th {
    padding: 0 2px;
    background-color: #d7dbd6;
}
.group span {
    display: flex;
    justify-content: space-between;
}
.group span::after {
    content: '\00AB';
    padding-right: 2px;
    transform: rotate(90deg);
    font-size: 12px;
}
.off td {
    color: #878c88;
}
.properties .field {
    padding: 0;
}
.field input, .field button {
    display: block;
    width: 100%;
    height: 15px;
}
.field input {
    padding-left: 4px;
    border: 1px solid #222;
}
.field button {
    background-color: #dfe3de;
    border: 1px solid #b5b9b5;
}
.properties input[type="checkbox"] {
    display: block;
    appearance: none;
    width: 11px;
    height: 11px;
    border: 1px solid #444;
    background-color: #fff;
}
.prop-footer {
    display: flex;
    justify-content: space-between;
    align-items: center;
    height: 22px;
    padding: 0 3px 0 2px;
}
.prop-footer a {
    color: #2a68ae;
    margin-bottom: 5px;
}
.prop-footer button {
    width: 58px;
    height: 18px;
    margin-bottom: 1px;
    background-color: #c8ccc8;
    border: 1px solid #bcc0bc;
    color: #8b908c;
}

/* drawing view */
.view {
    display: flex;
    flex-direction: column;
    flex: 1;
    min-width: 0;
    background-color: #fbfffb;
}
.view-tabs {
    display: flex;
    flex: none;
    justify-content: space-between;
    height: 17px;
    padding-right: 3px;
    background-color: #c8ccc7;
}
.view-tab {
    display: flex;
    align-items: center;
    width: 106px;
    padding: 0 4px;
    gap: 6px;
    background-color: #fbfffb;
    font-weight: 600;
}
.view-tab button {
    margin-left: auto;
}
.view-body {
    position: relative;
    display: flex;
    flex: 1;
    min-height: 0;
}
.view-body .scrollbar {
    margin-right: 2px;
}
.drawing {
    flex: 1;
    min-width: 0;
    height: 100%;
}
.navbar {
    position: absolute;
    top: 2px;
    right: 15px;
    display: flex;
    flex-direction: column;
    align-items: center;
    gap: 4px;
    width: 24px;
    height: 78px;
    padding: 2px 0;
    border: 1px solid #c0c4c0;
    border-radius: 4px;
    background-color: #eff3ee;
}
.navbar hr {
    width: 17px;
    margin: 0;
    border: none;
    border-top: 1px solid #c8ccc8;
}
.dot {
    flex: none;
    align-self: flex-end;
    width: 5px;
    height: 5px;
    margin-right: 2px;
    border: 1px solid #aaa;
    border-radius: 50%;
}
.view-controls {
    display: flex;
    flex: none;
    align-items: center;
    gap: 3px;
    height: 17px;
    padding: 0 2px 0 18px;
    background-color: #ebefea;
    border-bottom: 1px solid #d5d9d5;
}
.view-controls .scale {
    width: 41px;
}
.view-controls .chev {
    margin: 0 3px;
}
.view-controls .chev.left {
    margin-left: 0;
}
.hscroll {
    flex: 1;
}
.hscroll .knob {
    width: 12px;
    height: 12px;
    margin: 0 auto;
}

/* project browser */
.browser {
    display: flex;
    flex-direction: column;
    width: 256px;
    background-color: #fbfffb;
    border-left: 1px solid #c8ccc8;
}
.browser .panel-title {
    padding-right: 3px;
}
.browser-body {
    display: flex;
    flex: 1;
    min-height: 0;
}
.tree {
    flex: 1;
    padding-left: 7px;
    overflow: hidden;
}
.tree ul {
    margin-left: 17px;
}
.tree li {
    background: linear-gradient(#ccd0cc, #ccd0cc) 0 0 / 1px 100% no-repeat;
}
.tree li:last-child {
    background-size: 1px 7px;
}
.tree li.more {
    background-size: 1px 100%;
}
.row, .leaf {
    display: flex;
    align-items: center;
    height: 15px;
    white-space: nowrap;
}
.row.kind {
    height: 14px;
}
.toggle {
    flex: none;
    order: -2;
    width: 9px;
    height: 9px;
    margin-left: -4px;
    border: 1px solid #8c938f;
    background: linear-gradient(#555, #555) center / 5px 1px no-repeat, #f1f4f1;
}
.row::before {
    content: '';
    order: -1;
    width: 8px;
    height: 1px;
    margin-right: 2px;
    background-color: #ccd0cc;
}
.row svg {
    margin: 0 1px 0 -4px;
}
.leaf::before {
    content: '';
    width: 10px;
    height: 1px;
    margin-right: 1px;
    background-color: #ccd0cc;
}
.leaf svg {
    margin-right: 4px;
}
.leaf.open {
    font-weight: 700;
    color: #000;
}
.current {
    padding: 0 2px;
    background-color: #dce0dc;
}

/* status bar */
.statusbar {
    display: flex;
    flex: none;
    align-items: center;
    gap: 5px;
    height: 27px;
    padding: 0 51px 4px 459px;
}
.statusbar .select {
    height: 15px;
    background-color: #fbfffb;
}
.statusbar .workset, .statusbar .model {
    width: 170px;
    color: #777;
}
.options-icon {
    margin-left: 13px;
}
.picks {
    display: flex;
    align-items: center;
    gap: 6px;
    margin-left: auto;
}
.picks span {
    margin-left: -6px;
}

/* taskbar */
.taskbar {
    display: flex;
    flex: none;
    height: 28px;
    background-color: #d3e5ea;
}
.apps {
    display: flex;
    flex: 1;
}
.apps button {
    display: grid;
    place-items: center;
    width: 42px;
    padding-bottom: 5px;
}
.apps .running {
    background: linear-gradient(#1a6fc0, #1a6fc0) center bottom / 34px 3px no-repeat;
}
.apps .focus {
    background-color: #edf5f8;
    background-size: 42px 3px;
}
.sharing {
    display: flex;
    align-items: center;
    gap: 8px;
    width: 334px;
    margin-top: 2px;
    padding: 0 8px;
    background-color: #fbfdfc;
    white-space: nowrap;
}
.sharing button {
    align-self: flex-start;
    width: 88px;
    height: 32px;
    margin: 5px 0 0;
    border-radius: 16px;
    background-color: #0f57cf;
    color: #fff;
    font-weight: 700;
}
.sharing span, .sharing a {
    margin-top: 16px;
    color: #333;
}
.sharing a {
    color: #2558a8;
}
.bars {
    width: 4px;
    height: 12px;
    margin-top: 14px;
    border: solid #c5c9c5;
    border-width: 0 1px;
}
.tray {
    display: flex;
    align-items: center;
    gap: 9px;
    width: 240px;
    padding: 0 20px 4px 9px;
}
.clock {
    text-align: center;
}
.notices {
    margin-left: auto;
}
```
